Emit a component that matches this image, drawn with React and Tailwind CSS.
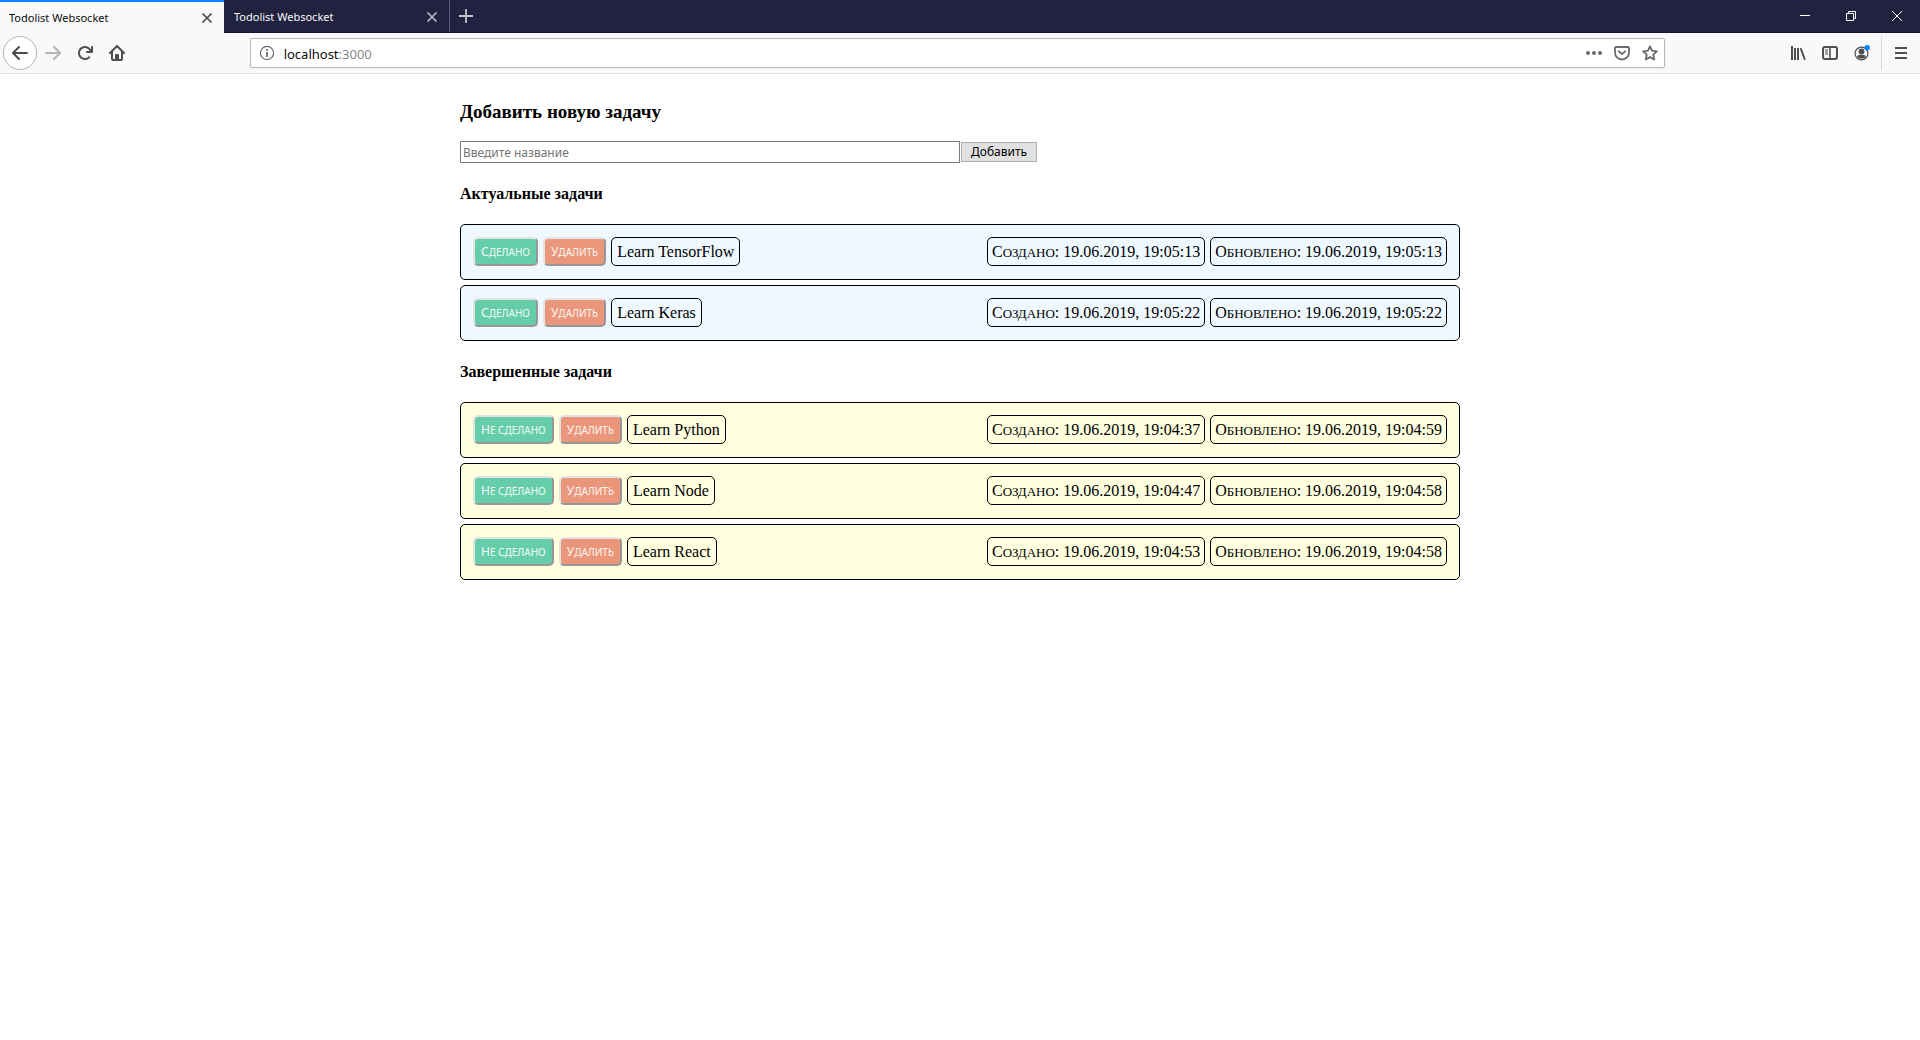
import React from "react";

const activeTasks = [
  { title: "Learn TensorFlow", created: "19.06.2019, 19:05:13", updated: "19.06.2019, 19:05:13" },
  { title: "Learn Keras", created: "19.06.2019, 19:05:22", updated: "19.06.2019, 19:05:22" },
];

const finishedTasks = [
  { title: "Learn Python", created: "19.06.2019, 19:04:37", updated: "19.06.2019, 19:04:59" },
  { title: "Learn Node", created: "19.06.2019, 19:04:47", updated: "19.06.2019, 19:04:58" },
  { title: "Learn React", created: "19.06.2019, 19:04:53", updated: "19.06.2019, 19:04:58" },
];

function Icon({ children, className = "size-4" }) {
  return (
    <svg viewBox="0 0 16 16" fill="currentColor" aria-hidden="true" className={className}>
      {children}
    </svg>
  );
}

function CloseIcon() {
  return (
    <Icon className="size-4">
      <path d="M3.5 3.5l9 9M12.5 3.5l-9 9" fill="none" stroke="currentColor" strokeWidth="1.7" />
    </Icon>
  );
}

function BackIcon() {
  return (
    <Icon>
      <path d="M15 7H3.414l4.293-4.293a1 1 0 0 0-1.414-1.414l-6 6a1 1 0 0 0 0 1.414l6 6a1 1 0 0 0 1.414-1.414L3.414 9H15a1 1 0 0 0 0-2z" />
    </Icon>
  );
}

function ForwardIcon() {
  return (
    <Icon>
      <path d="M15.707 7.293l-6-6a1 1 0 0 0-1.414 1.414L12.586 7H1a1 1 0 0 0 0 2h11.586l-4.293 4.293a1 1 0 1 0 1.414 1.414l6-6a1 1 0 0 0 0-1.414z" />
    </Icon>
  );
}

function ReloadIcon() {
  return (
    <Icon>
      <path d="M15 1a1 1 0 0 0-1 1v2.418A6.995 6.995 0 1 0 8 15a6.954 6.954 0 0 0 4.95-2.05 1 1 0 0 0-1.414-1.414A5.019 5.019 0 1 1 12.549 6H10a1 1 0 0 0 0 2h5a1 1 0 0 0 1-1V2a1 1 0 0 0-1-1z" />
    </Icon>
  );
}

function HomeIcon() {
  return (
    <Icon>
      <path
        fillRule="evenodd"
        d="M15.707 7.293l-7-7a1 1 0 0 0-1.414 0l-7 7a1 1 0 0 0 1.414 1.414L2 8.414V14a2 2 0 0 0 2 2h8a2 2 0 0 0 2-2V8.414l.293.293a1 1 0 0 0 1.414-1.414zM12 14h-2v-4a1 1 0 0 0-1-1H7a1 1 0 0 0-1 1v4H4V6.414l4-4 4 4z"
      />
      <path d="M7 10h2v4H7z" opacity=".35" />
    </Icon>
  );
}

function ToolButton({ label, children, className = "text-[#4f4f52]" }) {
  return (
    <button type="button" aria-label={label} className={`flex size-8 items-center justify-center ${className}`}>
      {children}
    </button>
  );
}

function TabBar() {
  return (
    <div className="flex h-[33px] border-b border-[#14142b] bg-[#20223f] text-[11px] leading-4">
      <div className="-mb-px flex w-56 items-center justify-between border-t-2 border-[#0a84ff] bg-[#f9f9fa] pr-[9px] pl-[9px] text-[#0c0c0d]">
        <span>Todolist Websocket</span>
        <button type="button" aria-label="Close tab" className="text-[#4a4a4c]">
          <CloseIcon />
        </button>
      </div>
      <div className="flex w-[226px] items-center justify-between border-r border-[#5c5d75] pt-0.5 pr-[9px] pl-2.5 text-[#f9f9fa]">
        <span>Todolist Websocket</span>
        <button type="button" aria-label="Close tab" className="text-[#b8b8c4]">
          <CloseIcon />
        </button>
      </div>
      <button type="button" aria-label="New tab" className="flex w-8 items-center justify-center text-[#c5c5d0]">
        <Icon>
          <path d="M8 1v14M1 8h14" fill="none" stroke="currentColor" strokeWidth="1.8" />
        </Icon>
      </button>
      <div className="flex-1" />
      <div className="flex text-white">
        <button type="button" aria-label="Minimize" className="flex w-[46px] items-center justify-center">
          <svg viewBox="0 0 10 10" className="size-2.5" stroke="currentColor" fill="none">
            <path d="M0 4.5h10" />
          </svg>
        </button>
        <button type="button" aria-label="Restore" className="flex w-[46px] items-center justify-center">
          <svg viewBox="0 0 10 10" className="size-2.5" stroke="currentColor" fill="none">
            <path d="M.5 2.5h7v7h-7zM2.5 2.5v-2h7v7h-2" />
          </svg>
        </button>
        <button type="button" aria-label="Close" className="flex w-[46px] items-center justify-center">
          <svg viewBox="0 0 10 10" className="size-2.5" stroke="currentColor" fill="none">
            <path d="M0 0l10 10M10 0L0 10" />
          </svg>
        </button>
      </div>
    </div>
  );
}

function Toolbar() {
  return (
    <div className="flex h-[41px] items-center border-b border-[#dcdcdd] bg-[#f9f9fa] px-[3px]">
      <button
        type="button"
        aria-label="Back"
        className="flex size-[34px] items-center justify-center rounded-full border border-[#b4b4b6] bg-white text-[#4a4a4c]"
      >
        <BackIcon />
      </button>
      <ToolButton label="Forward" className="text-[#b5b5b6]">
        <ForwardIcon />
      </ToolButton>
      <ToolButton label="Reload">
        <ReloadIcon />
      </ToolButton>
      <ToolButton label="Home">
        <HomeIcon />
      </ToolButton>
      <div className="flex-1" />
      <div className="flex h-[30px] flex-[12] items-center rounded-xs border border-[#b9b9bb] bg-white pr-1.5 pl-2 text-[#6a6a6c] shadow-xs">
        <Icon>
          <circle cx="8" cy="8" r="6.6" fill="none" stroke="currentColor" strokeWidth="1.2" />
          <path d="M7.1 7h1.8v5H7.1zM7.1 4h1.8v1.8H7.1z" />
        </Icon>
        <a href="#" className="ml-[9px] flex-1 pt-0.5 text-[13px] leading-5 text-[#0c0c0d]">
          localhost<span className="text-[#87878a]">:3000</span>
        </a>
        <div className="flex gap-3">
          <button type="button" aria-label="Page actions">
            <Icon>
              <circle cx="2" cy="8" r="2" />
              <circle cx="8" cy="8" r="2" />
              <circle cx="14" cy="8" r="2" />
            </Icon>
          </button>
          <button type="button" aria-label="Save to Pocket">
            <Icon>
              <path
                d="M2 2h12a1 1 0 0 1 1 1v4.5a7 7 0 0 1-14 0V3a1 1 0 0 1 1-1z"
                fill="none"
                stroke="currentColor"
                strokeWidth="1.8"
              />
              <path
                d="M4.9 6.3L8 9.2l3.1-2.9"
                fill="none"
                stroke="currentColor"
                strokeWidth="1.8"
                strokeLinecap="round"
                strokeLinejoin="round"
              />
            </Icon>
          </button>
          <button type="button" aria-label="Bookmark">
            <Icon>
              <path
                d="M8 1.3l2 4.4 4.9.6-3.6 3.3.9 4.9L8 12.1l-4.2 2.4.9-4.9L1.1 6.3 6 5.7z"
                fill="none"
                stroke="currentColor"
                strokeWidth="1.8"
                strokeLinejoin="round"
              />
            </Icon>
          </button>
        </div>
      </div>
      <div className="flex-1" />
      <ToolButton label="Library">
        <Icon>
          <path d="M1 1h2v14H1zM4 3h2v12H4zM7 3h2v12H7zM9.7 3.4l1.8-.7 4.3 11.7-1.8.7z" />
        </Icon>
      </ToolButton>
      <ToolButton label="Sidebars">
        <Icon>
          <rect x="1" y="2" width="14" height="12" rx="2" fill="none" stroke="currentColor" strokeWidth="2" />
          <path d="M7.2 2h1.6v12H7.2zM3 4.5h3v1H3zM3 6.5h3v1H3zM3 8.5h3v1H3z" />
        </Icon>
      </ToolButton>
      <ToolButton label="Account">
        <Icon>
          <circle cx="7.5" cy="8.5" r="6.4" fill="none" stroke="currentColor" strokeWidth="1.2" />
          <circle cx="7.5" cy="6.5" r="2.9" />
          <path d="M3 11.2c1-1.2 2.6-1.4 4.5-1.4s3.5.2 4.5 1.4a5.2 5.2 0 0 1-9 0z" />
          <circle cx="13.2" cy="2.7" r="2.7" fill="#0a84ff" />
        </Icon>
      </ToolButton>
      <div className="mx-[3px] h-[34px] w-px bg-[#d7d7db]" />
      <ToolButton label="Menu">
        <Icon>
          <path d="M2 2h12v2H2zM2 7h12v2H2zM2 12h12v2H2z" />
        </Icon>
      </ToolButton>
    </div>
  );
}

function TaskButton({ children, className }) {
  return (
    <button
      type="button"
      className={`h-[29px] rounded-[5px] border-2 border-t-[#e3e3e3] border-r-[#979797] border-b-[#979797] border-l-[#e3e3e3] px-1.5 font-['Noto_Sans',sans-serif] text-white/90 ${className}`}
    >
      <span className="block text-[10px] leading-4 uppercase first-letter:text-[12px]">{children}</span>
    </button>
  );
}

function Pill({ children, className = "px-[5px]" }) {
  return (
    <span className={`h-[29px] rounded-[5px] border border-black py-[5px] leading-[17px] ${className}`}>
      {children}
    </span>
  );
}

function Stamp({ label, time }) {
  return (
    <Pill className="flex items-baseline px-1 whitespace-pre">
      <span className="block text-[13px] leading-4 uppercase first-letter:text-[16px]">{label}</span>
      <span>: {time}</span>
    </Pill>
  );
}

function TaskList({ title, tasks, toggleLabel, rowClass }) {
  return (
    <section>
      <h4 className="pt-[22px] pb-[21px] text-[16px] leading-[18px] font-bold">{title}</h4>
      <ul className="flex flex-col gap-[5px]">
        {tasks.map((task) => (
          <li
            key={task.title}
            className={`flex items-start justify-between rounded-[5px] border border-black px-3 pt-3 pb-[13px] ${rowClass}`}
          >
            <div className="flex gap-[5px]">
              <TaskButton className="bg-[#66cdaa]">{toggleLabel}</TaskButton>
              <TaskButton className="bg-[#e9967a]">Удалить</TaskButton>
              <Pill>{task.title}</Pill>
            </div>
            <div className="flex gap-[5px]">
              <Stamp label="Создано" time={task.created} />
              <Stamp label="Обновлено" time={task.updated} />
            </div>
          </li>
        ))}
      </ul>
    </section>
  );
}

export default function App() {
  return (
    <div className="min-h-screen bg-white text-black">
      <header className="font-['Noto_Sans',sans-serif]">
        <TabBar />
        <Toolbar />
      </header>
      <main className="mx-auto max-w-[1000px] pt-[27px] font-['Liberation_Serif',serif] text-[16px]">
        <h3 className="text-[19px] leading-[22px] font-bold">Добавить новую задачу</h3>
        <form className="mt-[18px] flex items-center gap-px font-['Noto_Sans',sans-serif] text-[12px] leading-4">
          <input
            type="text"
            aria-label="Введите название"
            placeholder="Введите название"
            className="h-[22px] w-1/2 border border-[#7a7a7a] bg-white px-0.5 placeholder:text-[#757575]"
          />
          <button type="button" className="h-5 border border-[#adadad] bg-[#e1e1e1] px-[9px]">
            Добавить
          </button>
        </form>
        <TaskList title="Актуальные задачи" tasks={activeTasks} toggleLabel="Сделано" rowClass="bg-[#f0f8ff]" />
        <TaskList title="Завершенные задачи" tasks={finishedTasks} toggleLabel="Не сделано" rowClass="bg-[#ffffe0]" />
      </main>
    </div>
  );
}
